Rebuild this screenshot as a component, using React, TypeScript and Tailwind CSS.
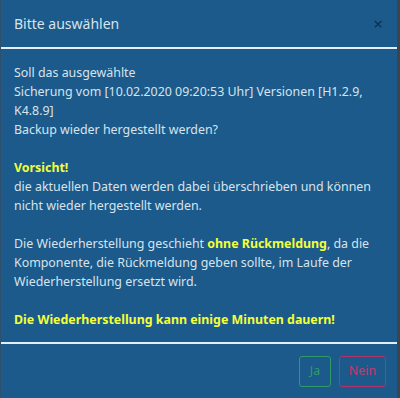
export default function App() {
  return (
    <div className="w-[400px] h-[398px] bg-[#3a4550] flex font-['Noto_Sans',sans-serif]">
      <div className="w-[397px] h-full bg-[#1b5a8b] border-l border-[#2f4f6a] flex flex-col text-[#d8e3ec]">
        <div className="h-[47px] flex items-center justify-between pl-[13px] pr-[14px]">
          <h2 className="text-[14px]">Bitte auswählen</h2>
          <span className="text-[#0e2f4a] text-[17px] leading-none">×</span>
        </div>
        <div className="h-[2px] bg-[#e4eef5]" />
        <div className="flex-1 pl-[13px] pr-3 pt-[14px] text-[12.4px] leading-[19px]">
          <p>
            Soll das ausgewählte
            <br />
            Sicherung vom [10.02.2020 09:20:53 Uhr] Versionen [H1.2.9, K4.8.9]
            <br />
            Backup wieder hergestellt werden?
          </p>
          <p className="mt-[19px]">
            <b className="text-[#f2ff3a]">Vorsicht!</b>
            <br />
            die aktuellen Daten werden dabei überschrieben und können nicht wieder hergestellt werden.
          </p>
          <p className="mt-[19px]">
            Die Wiederherstellung geschieht <b className="text-[#f2ff3a]">ohne Rückmeldung</b>, da die Komponente, die
            Rückmeldung geben sollte, im Laufe der Wiederherstellung ersetzt wird.
          </p>
          <p className="mt-[19px] font-bold text-[#f2ff3a]">Die Wiederherstellung kann einige Minuten dauern!</p>
        </div>
        <div className="h-[2px] bg-[#e4eef5]" />
        <div className="h-[54px] flex items-center justify-end gap-[8px] pr-[11px]">
          <button className="w-[32px] h-[31px] border border-[#2e9a6a] rounded-[3px] text-[#2e9a6a] text-[12.4px]">Ja</button>
          <button className="w-[47px] h-[31px] border border-[#b0336a] rounded-[3px] text-[#c13a6f] text-[12.4px]">Nein</button>
        </div>
      </div>
    </div>
  );
}
